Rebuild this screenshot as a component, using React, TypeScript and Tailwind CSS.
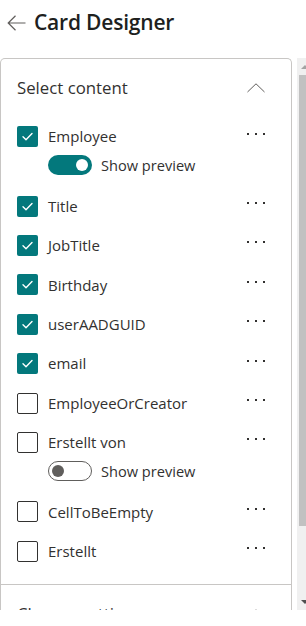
import { ReactNode } from "react";

type Field = { name: string; checked: boolean; preview?: "on" | "off" };

const fields: Field[] = [
  { name: "Employee", checked: true, preview: "on" },
  { name: "Title", checked: true },
  { name: "JobTitle", checked: true },
  { name: "Birthday", checked: true },
  { name: "userAADGUID", checked: true },
  { name: "email", checked: true },
  { name: "EmployeeOrCreator", checked: false },
  { name: "Erstellt von", checked: false, preview: "off" },
  { name: "CellToBeEmpty", checked: false },
  { name: "Erstellt", checked: false },
];

function Checkbox({ checked }: { checked: boolean }) {
  if (!checked) {
    return <div className="w-[21px] h-[21px] rounded-[2px] border border-[#323130] shrink-0" />;
  }
  return (
    <div className="w-[21px] h-[21px] rounded-[2px] bg-[#03787c] shrink-0 flex items-center justify-center">
      <svg width="21" height="21" viewBox="0 0 21 21" fill="none">
        <path d="M6 10.8 L9 13.8 L15 7.6" stroke="white" strokeWidth="1.4" strokeLinecap="round" strokeLinejoin="round" />
      </svg>
    </div>
  );
}

function Toggle({ on }: { on: boolean }) {
  return on ? (
    <div className="w-[44px] h-[20px] rounded-full bg-[#03787c] flex items-center justify-end pr-[4px]">
      <div className="w-[12px] h-[12px] rounded-full bg-white" />
    </div>
  ) : (
    <div className="w-[44px] h-[20px] rounded-full border border-[#605e5c] flex items-center pl-[3px]">
      <div className="w-[12px] h-[12px] rounded-full bg-[#605e5c]" />
    </div>
  );
}

function Dots() {
  return (
    <div className="flex gap-[6px] mb-[6px]">
      <span className="w-[2px] h-[2px] bg-[#323130]" />
      <span className="w-[2px] h-[2px] bg-[#323130]" />
      <span className="w-[2px] h-[2px] bg-[#323130]" />
    </div>
  );
}

function Chevron() {
  return (
    <svg width="18" height="10" viewBox="0 0 18 10" fill="none">
      <path d="M0.5 9 L9 0.8 L17.5 9" stroke="#605e5c" strokeWidth="1" />
    </svg>
  );
}

function SectionHeader({ children }: { children: ReactNode }) {
  return (
    <div className="h-[58px] flex items-center justify-between pl-[16px] pr-[26px]">
      <span className="text-[16.8px] text-[#323130]">{children}</span>
      <Chevron />
    </div>
  );
}

export default function App() {
  return (
    <div className="w-[306px] h-[626px] bg-white overflow-hidden font-['Segoe_UI','Open_Sans',sans-serif] text-[#323130]">
      {/* Title */}
      <div className="h-[46px] flex items-center pl-[7px] gap-[8px]">
        <svg width="19" height="16" viewBox="0 0 19 16" fill="none">
          <path d="M18.5 8 H1.2 M8.5 0.8 L1.2 8 L8.5 15.2" stroke="#605e5c" strokeWidth="1.2" />
        </svg>
        <h1 className="text-[21px] font-semibold text-[#201f1e] tracking-[-0.2px]">Card Designer</h1>
      </div>

      <div className="mt-[12px] h-[552px] flex gap-[5px]">
        <div className="w-[292px] h-full overflow-hidden border border-b-0 border-[#c8c6c4] rounded-t-[5px]">
          <SectionHeader>Select content</SectionHeader>
          <div className="pl-[16px] pr-[26px] pb-[13px]">
            {fields.map((f) => (
              <div key={f.name}>
                <div className="h-[39.4px] flex items-center">
                  <Checkbox checked={f.checked} />
                  <span className="ml-[10px] text-[15px] flex-1">{f.name}</span>
                  <Dots />
                </div>
                {f.preview && (
                  <div className="h-[20px] box-content flex items-center pl-[31px] pb-[11px] -mt-[1px]">
                    <Toggle on={f.preview === "on"} />
                    <span className="ml-[9px] text-[14.6px] leading-none">Show preview</span>
                  </div>
                )}
              </div>
            ))}
          </div>
          <div className="border-t border-[#c8c6c4]">
            <SectionHeader>Change settings</SectionHeader>
          </div>
        </div>

        {/* scrollbar */}
        <div className="w-[9px] h-full bg-[#f0f0f0] flex flex-col items-end">
          <div className="h-[17px] w-full flex items-center justify-end">
            <div className="w-0 h-0 border-l-[4px] border-r-[4px] border-b-[4px] border-l-transparent border-r-transparent border-b-[#a3a3a3] mr-[-3px]" />
          </div>
          <div className="w-[7px] h-[451px] bg-[#c1c1c1]" />
          <div className="flex-1" />
          <div className="h-[17px] w-full flex items-center justify-end">
            <div className="w-0 h-0 border-l-[4px] border-r-[4px] border-t-[4px] border-l-transparent border-r-transparent border-t-[#505050] mr-[-3px]" />
          </div>
        </div>
      </div>
    </div>
  );
}
